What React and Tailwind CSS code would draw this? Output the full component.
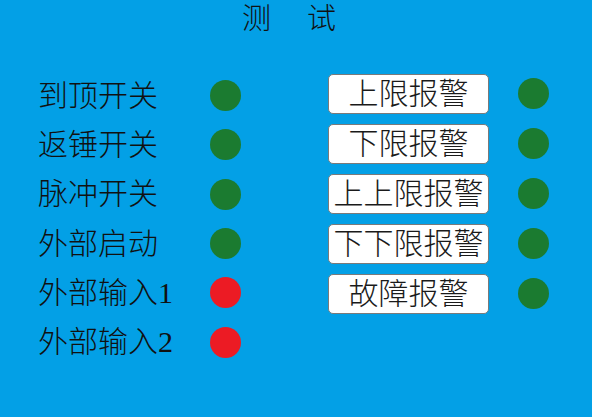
const FONT = { fontFamily: "'Liberation Serif', 'Noto Sans CJK SC', serif" }

const left = [
  { label: '到顶开关', on: true },
  { label: '返锤开关', on: true },
  { label: '脉冲开关', on: true },
  { label: '外部启动', on: true },
  { label: '外部输入1', on: false },
  { label: '外部输入2', on: false },
]

const right = ['上限报警', '下限报警', '上上限报警', '下下限报警', '故障报警']

function Lamp({ on }) {
  return (
    <div
      className={
        'w-[31px] h-[31px] rounded-full shrink-0 ' +
        (on ? 'bg-[#1b7b30]' : 'bg-[#ec1b24]')
      }
    />
  )
}

export default function App() {
  return (
    <div className="w-[592px] h-[417px] bg-[#03a0e6] text-[#111] font-light overflow-hidden" style={FONT}>
      {/* title */}
      <div className="h-[38px] flex items-center pl-[242px] text-[29px] leading-none">
        <span>测</span>
        <span className="ml-[36px]">试</span>
      </div>

      <div className="flex items-start">
        {/* inputs */}
        <div className="mt-[33px] pl-[38px] flex flex-col">
          {left.map((r) => (
            <div key={r.label} className="h-[49.3px] flex items-center">
              <div className="w-[172px] text-[30px] leading-none whitespace-nowrap">{r.label}</div>
              <Lamp on={r.on} />
            </div>
          ))}
        </div>

        {/* alarms */}
        <div className="mt-[30.5px] ml-[87px] flex flex-col">
          {right.map((t) => (
            <div key={t} className="h-[50px] flex items-center">
              <div className="w-[161px] h-[40px] bg-white border border-[#7a7a7a] rounded-[5px] flex items-center justify-center text-[30px] leading-none whitespace-nowrap text-[#1a1a1a]">
                {t}
              </div>
              <div className="ml-[29px]">
                <Lamp on />
              </div>
            </div>
          ))}
        </div>
      </div>
    </div>
  )
}
